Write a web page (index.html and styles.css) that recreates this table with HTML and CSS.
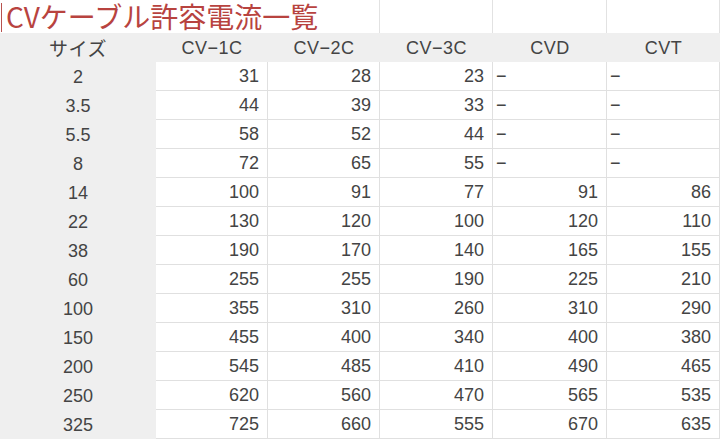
FILE: index.html
```html
<!DOCTYPE html>
<html lang="ja">
<head>
<meta charset="utf-8">
<title>CVケーブル許容電流一覧</title>
<link rel="stylesheet" href="styles.css">
</head>
<body>
<div class="sheet">
  <div class="title"><span class="title-text">CVケーブル許容電流一覧</span></div>
  <div class="blank"></div>
  <div class="blank"></div>
  <div class="blank"></div>

  <div class="hd label">サイズ</div>
  <div class="hd">CV−1C</div>
  <div class="hd">CV−2C</div>
  <div class="hd">CV−3C</div>
  <div class="hd">CVD</div>
  <div class="hd">CVT</div>

  <div class="label">2</div><div class="num">31</div><div class="num">28</div><div class="num">23</div><div class="dash">−</div><div class="dash">−</div>
  <div class="label">3.5</div><div class="num">44</div><div class="num">39</div><div class="num">33</div><div class="dash">−</div><div class="dash">−</div>
  <div class="label">5.5</div><div class="num">58</div><div class="num">52</div><div class="num">44</div><div class="dash">−</div><div class="dash">−</div>
  <div class="label">8</div><div class="num">72</div><div class="num">65</div><div class="num">55</div><div class="dash">−</div><div class="dash">−</div>
  <div class="label">14</div><div class="num">100</div><div class="num">91</div><div class="num">77</div><div class="num">91</div><div class="num">86</div>
  <div class="label">22</div><div class="num">130</div><div class="num">120</div><div class="num">100</div><div class="num">120</div><div class="num">110</div>
  <div class="label">38</div><div class="num">190</div><div class="num">170</div><div class="num">140</div><div class="num">165</div><div class="num">155</div>
  <div class="label">60</div><div class="num">255</div><div class="num">255</div><div class="num">190</div><div class="num">225</div><div class="num">210</div>
  <div class="label">100</div><div class="num">355</div><div class="num">310</div><div class="num">260</div><div class="num">310</div><div class="num">290</div>
  <div class="label">150</div><div class="num">455</div><div class="num">400</div><div class="num">340</div><div class="num">400</div><div class="num">380</div>
  <div class="label">200</div><div class="num">545</div><div class="num">485</div><div class="num">410</div><div class="num">490</div><div class="num">465</div>
  <div class="label">250</div><div class="num">620</div><div class="num">560</div><div class="num">470</div><div class="num">565</div><div class="num">535</div>
  <div class="label">325</div><div class="num">725</div><div class="num">660</div><div class="num">555</div><div class="num">670</div><div class="num">635</div>
</div>
</body>
</html>
```

FILE: styles.css
```css
html, body {
  margin: 0;
  padding: 0;
  background: #ffffff;
}

.sheet {
  display: grid;
  grid-template-columns: 156px 112px 112px 113px 114px 113px;
  grid-template-rows: 33px 29px;
  grid-auto-rows: 29px;
  width: 720px;
  font-family: "Liberation Sans", "Noto Sans CJK JP", sans-serif;
  font-size: 18px;
  color: #444444;
}

.sheet > div {
  box-sizing: border-box;
  display: flex;
  align-items: flex-end;
  line-height: 1;
  padding-bottom: 5px;
  white-space: nowrap;
}

.sheet > .title {
  grid-column: 1 / span 3;
  align-items: center;
  padding: 0 0 0 6px;
  font-family: "Noto Sans CJK JP", sans-serif;
  font-weight: 400;
  font-size: 28px;
  color: #b8433f;
  background: linear-gradient(#b8524e, #b8524e) 1px 3px / 1px 29px no-repeat;
  border-right: 1px solid #e2e2e2;
}

.title-text {
  display: block;
  line-height: 32px;
  height: 32px;
  margin-top: -1px;
}

.blank {
  border-right: 1px solid #e2e2e2;
}

.hd {
  background: #efefef;
  justify-content: center;
  letter-spacing: 0.5px;
}

.label {
  background: #efefef;
  justify-content: center;
}

.sheet > .hd.label {
  font-family: "Noto Sans CJK JP", sans-serif;
  font-size: 19px;
  line-height: 24px;
  padding-bottom: 2px;
}

.num {
  justify-content: flex-end;
  padding-right: 8px;
  background: #ffffff;
  border-right: 1px solid #e0e0e0;
  border-bottom: 1px solid #e0e0e0;
}

.dash {
  justify-content: flex-start;
  padding-left: 3px;
  background: #ffffff;
  border-right: 1px solid #e0e0e0;
  border-bottom: 1px solid #e0e0e0;
}
```
